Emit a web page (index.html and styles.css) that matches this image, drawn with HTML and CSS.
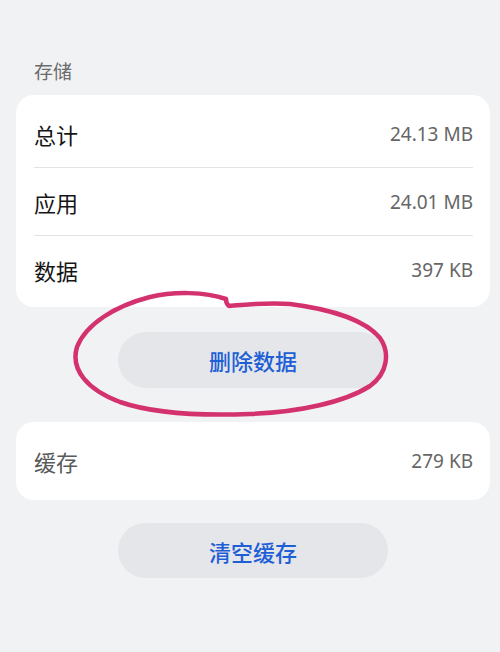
FILE: index.html
```html
<!DOCTYPE html>
<html lang="zh-CN">
<head>
<meta charset="utf-8">
<link rel="stylesheet" href="styles.css">
</head>
<body>
<div class="page">
  <div class="section-title">存储</div>
  <div class="card storage">
    <div class="row"><span class="label">总计</span><span class="value">24.13 MB</span></div>
    <div class="row"><span class="label">应用</span><span class="value">24.01 MB</span></div>
    <div class="row last"><span class="label">数据</span><span class="value">397 KB</span></div>
  </div>
  <div class="btn-wrap first-btn"><div class="btn">删除数据</div></div>
  <div class="card cache">
    <div class="row single"><span class="label muted">缓存</span><span class="value">279 KB</span></div>
  </div>
  <div class="btn-wrap second-btn"><div class="btn">清空缓存</div></div>
  <svg class="scribble" width="500" height="652" viewBox="0 0 500 652">
    <path d="M226 299 C205 292 175 291 150 297 C115 306 86 324 77 347 C70 370 88 390 120 402 C152 413 200 416 250 414 C300 412 345 402 370 386 C388 373 390 352 380 338 C365 320 330 309 290 304 C265 302 245 305 229 306 C226 304 226 301 226 299"
      fill="none" stroke="#d3326f" stroke-width="4.5" stroke-linecap="round" stroke-linejoin="round"/>
  </svg>
</div>
</body>
</html>
```
FILE: styles.css
```css
html, body {
  margin: 0;
  padding: 0;
  background: #f1f2f4;
}
body {
  font-family: "Noto Sans CJK SC", "Noto Sans", sans-serif;
  width: 500px;
  height: 652px;
  overflow: hidden;
}
.page {
  position: relative;
  padding-top: 58px;
  height: 652px;
  box-sizing: border-box;
}
.section-title {
  margin-left: 34px;
  font-size: 19px;
  line-height: 26px;
  color: #6b6b6b;
  margin-bottom: 11px;
}
.card {
  margin-left: 16px;
  margin-right: 10px;
  background: #ffffff;
  border-radius: 18px;
  padding: 0 17px 0 18px;
}
.storage {
  padding-top: 5px;
  padding-bottom: 3px;
}
.row {
  height: 68px;
  display: flex;
  align-items: center;
  justify-content: space-between;
  border-bottom: 1px solid #e3e3e5;
  box-sizing: border-box;
}
.row.last { border-bottom: none; }
.row.single { border-bottom: none; height: 78px; }
.label {
  font-size: 22px;
  color: #161616;
}
.label.muted { color: #5a5a5a; }
.value {
  font-family: "Noto Sans", "Noto Sans CJK SC", sans-serif;
  font-size: 19px;
  color: #666666;
}
.btn-wrap {
  margin-left: 16px;
  margin-right: 10px;
  display: flex;
  justify-content: center;
}
.first-btn { margin-top: 25px; margin-bottom: 34px; }
.second-btn { margin-top: 23px; }
.btn {
  width: 270px;
  height: 56px;
  border-radius: 28px;
  background: #e5e6e9;
  color: #1f5fd6;
  font-size: 22px;
  font-weight: 500;
  display: flex;
  align-items: center;
  justify-content: center;
}
.second-btn .btn { height: 55px; }
.scribble {
  position: absolute;
  left: 0;
  top: 0;
  pointer-events: none;
}
```
